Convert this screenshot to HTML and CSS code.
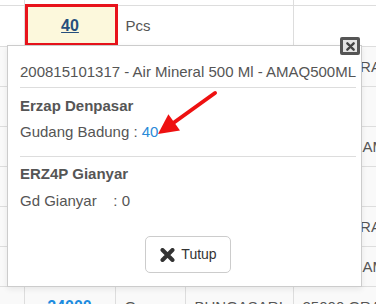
FILE: index.html
```html
<!DOCTYPE html>
<html lang="id">
<head>
  <meta charset="UTF-8">
  <meta name="viewport" content="width=device-width, initial-scale=1.0">
  <title>Stok Gudang</title>
  <link rel="stylesheet" href="styles.css">
</head>
<body>
  <div class="page">
    <table class="stok">
      <colgroup>
        <col class="c1"><col class="c2"><col class="c3"><col class="c4"><col class="c5">
      </colgroup>
      <tr class="row-top">
        <td></td><td colspan="3"></td><td></td>
      </tr>
      <tr class="row-first">
        <td></td>
        <td class="qty qty-active"><a href="#">40</a></td>
        <td colspan="2">Pcs</td>
        <td></td>
      </tr>
      <tr><td></td><td></td><td></td><td></td><td>25000 GRAM</td></tr>
      <tr><td></td><td></td><td></td><td></td><td></td></tr>
      <tr><td></td><td></td><td></td><td></td><td>1000 GRAM</td></tr>
      <tr><td></td><td></td><td></td><td></td><td></td></tr>
      <tr><td></td><td></td><td></td><td></td><td>25000 GRAM</td></tr>
      <tr><td></td><td></td><td></td><td></td><td>1000 GRAM</td></tr>
      <tr>
        <td></td>
        <td class="qty"><a href="#">24000</a></td>
        <td>Gr</td>
        <td>BUNGASARI</td>
        <td>25000 GRAM</td>
      </tr>
    </table>

    <div class="popover">
      <button class="btn-close" title="Tutup">
        <svg width="9" height="9" viewBox="0 0 10 10"><path d="M1.5 1.5L8.5 8.5M8.5 1.5L1.5 8.5" stroke="#444" stroke-width="2.6" stroke-linecap="round"/></svg>
      </button>
      <div class="pop-title">200815101317 - Air Mineral 500 Ml - AMAQ500ML</div>
      <hr class="sep">
      <div class="store">Erzap Denpasar</div>
      <div class="line">Gudang Badung : <span class="num">40</span></div>
      <hr class="sep sep-2">
      <div class="store">ERZ4P Gianyar</div>
      <div class="line">Gd Gianyar&nbsp;&nbsp;&nbsp; : 0</div>
      <div class="pop-footer">
        <button class="btn">
          <svg width="15" height="14" viewBox="0 0 15 14"><path d="M2.5 2L12.5 12M12.5 2L2.5 12" stroke="#333" stroke-width="4" stroke-linecap="round"/></svg>
          Tutup
        </button>
      </div>
    </div>

    <svg class="pointer" width="75" height="55" viewBox="0 0 75 55">
      <line x1="65" y1="8" x2="24" y2="37.5" stroke="#ee1111" stroke-width="4" stroke-linecap="round"/>
      <polygon points="8,49 18.4,29.2 30,45.4" fill="#ee1111"/>
    </svg>
  </div>
</body>
</html>
```

FILE: styles.css
```css
html, body {
  margin: 0;
  background: #ffffff;
  overflow: hidden;
}
body {
  font-family: "Liberation Sans", Arial, sans-serif;
  font-size: 15px;
  color: #555;
}
.page {
  position: relative;
  width: 376px;
  height: 304px;
  overflow: hidden;
}

/* tabel di belakang */
.stok {
  border-collapse: collapse;
  table-layout: fixed;
  width: 420px;
}
.c1 { width: 24px; }
.c2 { width: 91px; }
.c3 { width: 70px; }
.c4 { width: 108px; }
.c5 { width: 127px; }
.stok tr {
  height: 40px;
}
.stok td {
  border: 1px solid #ddd;
  padding: 10px 9px;
  line-height: 19px;
  white-space: nowrap;
  overflow: hidden;
  background: #f9f9f9;
}
.stok tr:first-child td { border-top: none; }
.stok td:first-child { border-left: none; }
.stok .row-top {
  height: 5px;
}
.row-top td {
  padding: 0;
  line-height: 0;
  background: #fff;
}
.stok .row-first {
  height: 41px;
}
.row-first td {
  background: #fff;
  line-height: 20px;
  padding-left: 10px;
}
.qty {
  text-align: center;
}
.qty a {
  font-size: 16px;
  font-weight: bold;
  color: #1c8ce0;
  text-decoration: none;
}
.stok td.qty-active {
  position: relative;
  overflow: visible;
  background: #fcf8dc;
}
.qty-active a {
  color: #264f7d;
  text-decoration: underline;
}
.qty-active::after {
  content: "";
  position: absolute;
  left: 0;
  top: -2px;
  width: 93px;
  height: 42px;
  border: 3px solid #e8131b;
  box-sizing: border-box;
}

/* popover stok */
.popover {
  position: absolute;
  left: 7px;
  top: 45px;
  width: 355px;
  height: 242px;
  box-sizing: border-box;
  background: #fff;
  border: 1px solid #ccc;
  box-shadow: 0 2px 6px rgba(0, 0, 0, 0.08);
  padding: 16px 5px 0 12px;
  line-height: 20px;
}
.pop-title {
  white-space: nowrap;
}
.sep {
  border: none;
  border-top: 1px solid #ddd;
  margin: 5px 0 0 0;
}
.sep-2 {
  margin-top: 14px;
}
.store {
  font-weight: bold;
  margin-top: 8px;
}
.sep-2 + .store {
  margin-top: 7px;
}
.line {
  margin-top: 6px;
}
.sep-2 + .store + .line {
  margin-top: 7px;
}
.num {
  color: #2a8ad8;
}
.pop-footer {
  margin-top: 25px;
  text-align: center;
}
.btn {
  font-family: inherit;
  font-size: 14px;
  line-height: 19px;
  color: #333;
  background: #fff;
  border: 1px solid #ccc;
  border-radius: 5px;
  padding: 8px 13px 8px 14px;
  display: inline-flex;
  align-items: center;
  gap: 6px;
  cursor: pointer;
}
.btn-close {
  position: absolute;
  top: -9px;
  right: 1px;
  width: 20px;
  height: 18px;
  padding: 0;
  box-sizing: border-box;
  border: 3px solid #555;
  border-radius: 2px;
  background: #e4e4e4;
  display: flex;
  align-items: center;
  justify-content: center;
  cursor: pointer;
}
.pointer {
  position: absolute;
  left: 150px;
  top: 85px;
}
```
